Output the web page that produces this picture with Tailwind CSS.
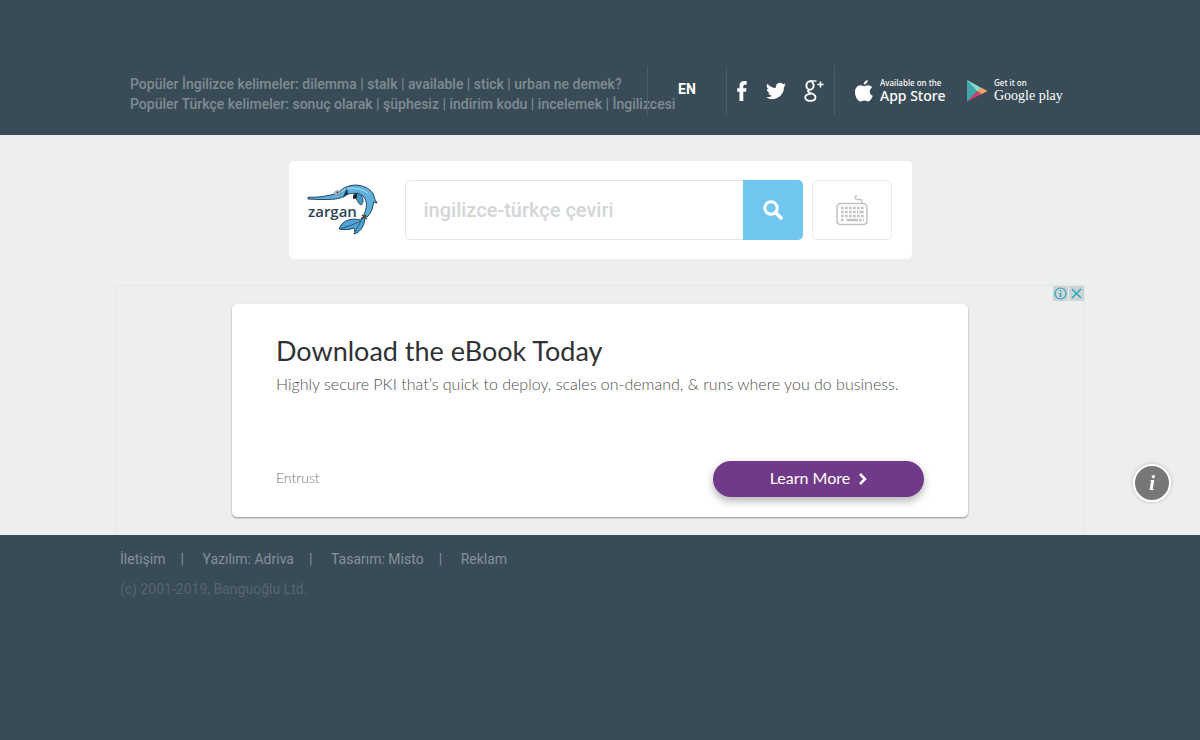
<!DOCTYPE html>
<html lang="tr">

<head>
    <meta charset="UTF-8">
    <meta name="viewport" content="width=device-width, initial-scale=1.0">
    <title>Zargan - İngilizce Türkçe Sözlük</title>
    <script src="https://cdn.jsdelivr.net/npm/@tailwindcss/browser@4"></script>
</head>

<body class="min-h-screen bg-[#394b56] font-['Roboto',sans-serif] text-sm">
    <header class="bg-[#394b56] pt-[66px] pb-5">
        <div class="max-w-[960px] mx-auto px-[10px] flex h-[49px]">
            <div class="flex-1 min-w-0 pt-2 leading-5 font-medium text-[#7f8b92] whitespace-nowrap">
                <p>Popüler İngilizce kelimeler: <a href="#">dilemma</a> | <a href="#">stalk</a> | <a href="#">available</a> | <a href="#">stick</a> | <a href="#">urban ne demek?</a></p>
                <p>Popüler Türkçe kelimeler: <a href="#">sonuç olarak</a> | <a href="#">şüphesiz</a> | <a href="#">indirim kodu</a> | <a href="#">incelemek</a> | <a href="#">İngilizcesi</a></p>
            </div>
            <a href="#" class="w-[79px] shrink-0 border-l border-[#4d5d67] flex items-center justify-center pb-1 font-bold text-white">EN</a>
            <div class="w-[109px] shrink-0 border-x border-[#4d5d67] flex items-center justify-between px-[10px] text-white">
                <a href="#" aria-label="Facebook">
                    <svg class="w-[10px] h-5" viewBox="0 0 10 20" fill="currentColor"><path d="M9.600 0v3.700H8C6.600 3.700 6.300 4.300 6.300 5.200V7.200H9.500L9.100 10.700H6.300V20H2.500V10.700H.2V7.200H2.500V4.700C2.500 1.700 4.300 0 7.200 0z"/></svg>
                </a>
                <a href="#" aria-label="Twitter">
                    <svg class="w-5 h-5" viewBox="0 0 24 24" fill="currentColor"><path d="M24 4.600a10 10 0 0 1-2.800.8 4.900 4.900 0 0 0 2.200-2.700c-1 .6-2 1-3.100 1.200a4.900 4.900 0 0 0-8.400 4.500A14 14 0 0 1 1.700 3.200a4.900 4.900 0 0 0 1.500 6.600c-.8 0-1.600-.2-2.200-.6v.1a4.900 4.900 0 0 0 3.900 4.800c-.7.2-1.500.2-2.200.1a4.900 4.900 0 0 0 4.600 3.400A9.900 9.900 0 0 1 0 19.500a14 14 0 0 0 21.500-12.400A10 10 0 0 0 24 4.600z"/></svg>
                </a>
                <a href="#" aria-label="Google+">
                    <svg class="w-5 h-[22px]" viewBox="0 0 20 22" fill="none" stroke="currentColor">
                        <ellipse cx="6" cy="5.500" rx="3.600" ry="4.200" stroke-width="2"/>
                        <path d="M6 1H12.500" stroke-width="1.400"/>
                        <path d="M5 9.800C3.300 11 4 12.300 6 12.900C9 13.800 11.500 14.600 11.500 17.200C11.500 19.500 9.300 20.800 6.200 20.800C3.200 20.800 1.200 19.600 1.200 17.600C1.200 15.400 3.500 14 7 13.800" stroke-width="1.800"/>
                        <path d="M16.500 1.500v6M13.500 4.500h6" stroke-width="1.500"/>
                    </svg>
                </a>
            </div>
            <div class="w-[235px] shrink-0 flex items-center gap-5 pl-5 text-white whitespace-nowrap">
                <a href="#" class="flex items-center gap-[7px]">
                    <svg class="w-[18px] h-[22px]" viewBox="0 0 18 22" fill="currentColor"><path d="M12.700 0c.2 2.300-1.700 4.600-4 4.700C8.500 2.500 10.400.3 12.700 0zM9.200 6.200c.9 0 2-1 3.800-1 1.700 0 3.200.9 4.100 2.200-3.500 2.100-3 6.900.7 8.300-.8 2.300-2.700 5.600-4.700 5.700-1.500 0-2-.9-3.800-.9s-2.400.9-3.800.9C2.900 21.500 0 16.500 0 12.200 0 7.900 2.600 5.300 5.200 5.200c1.600 0 3 1 4 1z"/></svg>
                    <span class="flex flex-col w-[66px]">
                        <span class="text-[8px] leading-[10px] font-medium font-['Noto_Sans',sans-serif]">Available on the</span>
                        <span class="text-sm leading-4 font-medium font-['Noto_Sans',sans-serif]">App Store</span>
                    </span>
                </a>
                <a href="#" class="flex items-center gap-[6px]">
                    <svg class="w-[22px] h-6" viewBox="0 0 22 24">
                        <path d="M1 1L14 8.500L11 12L1 22.500z" fill="#49b8b4"/>
                        <path d="M1 1L11 12L1 22.500z" fill="#42a5ab"/>
                        <path d="M1 1L15.500 9L11.500 12.500z" fill="#8adbc5"/>
                        <path d="M1 22.500L11.500 12L15.500 15z" fill="#d0416f"/>
                        <path d="M15.500 8.800L21.500 12L15.500 15.300L11.500 12z" fill="#f3a36b"/>
                    </svg>
                    <span class="flex flex-col">
                        <span class="text-[8px] leading-[10px] font-medium font-['Noto_Sans',sans-serif]">Get it on</span>
                        <span class="text-sm leading-4 font-['Liberation_Serif',serif]">Google play</span>
                    </span>
                </a>
            </div>
        </div>
    </header>

    <main class="bg-[#edefef] pt-[26px]">
        <form class="max-w-[623px] mx-auto bg-white rounded-[5px] py-[19px] pr-5 pl-[18px] flex items-center">
            <a href="#" class="w-[98px] shrink-0" aria-label="Zargan">
                <svg class="w-[72px] h-[54px]" viewBox="0 0 72 54">
                    <path d="M1 14.200C10 14.800 22 13 31 10C36 4 44 1.500 51 2.200C61 3.500 67 9 67.500 15.500L70 20L66.500 19C66 26 63 31.500 60 34L56.500 32.500C60 26 61 18 56 13C48 9 42 10 37 13C32 17 20 17 1 16z" fill="#5fb1dc" stroke="#24465b" stroke-width="1"/>
                    <path d="M34 8.500C42 3.500 53 4.500 61 10" fill="none" stroke="#9ad3ef" stroke-width="1.300"/>
                    <path d="M38 9L40 5L41 11L36 15z" fill="#173b52"/>
                    <path d="M47 11C51 9 54 11 55 14C57 17 56 21 54 22C50 20 51 16 47 14z" fill="#4798c7" stroke="#173b52" stroke-width=".8"/>
                    <path d="M46 13L50 10L50 15L46 16z" fill="#17232b"/>
                    <path d="M27 9.500l3-2 3 1v3l-5 .5z" fill="#bbc6cc" stroke="#6d7d86" stroke-width=".6"/>
                    <circle cx="30.500" cy="9.500" r="1" fill="#253d4d"/>
                    <path d="M32 46C36 36 45 35 54 37L58 34C58 40 55 49 47 51C48 49 48 47 47 45C42 47 37 47 32 46z" fill="#4fa3d4" stroke="#24465b" stroke-width="1"/>
                    <path d="M34 45.500Q44 43 54 38L48 49" fill="none" stroke="#24465b" stroke-width=".8"/>
                    <path d="M54 36L59 32M55 32L60 36" stroke="#473c36" stroke-width="1.500"/>
                    <text x="1" y="34" font-family="Open Sans, sans-serif" font-size="15" font-weight="600" fill="#2b4353">zargan</text>
                </svg>
            </a>
            <input type="text" aria-label="ingilizce-türkçe çeviri" placeholder="ingilizce-türkçe çeviri" class="flex-1 min-w-0 h-[60px] border border-r-0 border-[#e4e4e4] rounded-l-[5px] px-[18px] text-xl font-medium text-gray-700 placeholder:text-[#d4d5d6] outline-none">
            <button type="submit" aria-label="Ara" class="w-[60px] h-[60px] shrink-0 bg-[#70c6ee] rounded-r-[5px] flex items-center justify-center text-white">
                <svg class="w-5 h-5" viewBox="0 0 20 20" fill="none" stroke="currentColor"><circle cx="8" cy="8" r="6.200" stroke-width="3"/><path d="M12.500 12.500L18 18" stroke-width="3.600" stroke-linecap="round"/></svg>
            </button>
            <button type="button" aria-label="Klavye" class="w-20 h-[60px] ml-[9px] shrink-0 border border-[#e9e8ea] rounded-[5px] flex items-center justify-center">
                <svg class="w-8 h-8" viewBox="0 0 32 32" fill="none" stroke="#c0c2c4">
                    <rect x="1" y="9.500" width="30" height="21" rx="3.500" stroke-width="1.500"/>
                    <path d="M26 9.500V7Q26 5.500 24 5.500H21Q19 5.500 19 4Q19 2 21 1.500" stroke-width="1.300"/>
                    <path d="M5 14H28M5 22H28" stroke-width="2.600" stroke-dasharray="2.600 1.400"/>
                    <path d="M5 18H22M5 26H9M23 26H28" stroke-width="2.600" stroke-dasharray="2.600 1.400"/>
                    <path d="M23.500 18H27.600M10.500 26H22" stroke-width="2.600"/>
                </svg>
            </button>
        </form>

        <section class="relative max-w-[970px] mx-auto mt-[26px] border border-b-0 border-[#e5e7e7] pt-[18px] pb-[18px]">
            <div class="absolute top-0 right-0 flex gap-px text-[#22a9bf]">
                <a href="#" aria-label="Reklam bilgisi" class="bg-[#cfd3d4]">
                    <svg class="w-[15px] h-[15px]" viewBox="0 0 15 15" fill="none" stroke="currentColor" stroke-width="1.200"><circle cx="7.500" cy="7.500" r="5.500"/><path d="M7.500 6.500V11M7.500 4V5.300" stroke-width="1.500"/></svg>
                </a>
                <button type="button" aria-label="Reklamı kapat" class="bg-[#cfd3d4]">
                    <svg class="w-[15px] h-[15px]" viewBox="0 0 15 15" stroke="currentColor" stroke-width="1.500"><path d="M3 3L12 12M12 3L3 12"/></svg>
                </button>
            </div>
            <div class="max-w-[736px] mx-auto bg-white rounded-[5px] shadow-[0_1px_2px_rgba(0,0,0,0.4)] px-11 pt-[31px] pb-5 font-['Lato',sans-serif]">
                <h2 class="text-[27px] leading-8 text-[#303134]">Download the eBook Today</h2>
                <p class="mt-1 text-base leading-[26px] font-light text-[#4f4f4f]">Highly secure PKI that’s quick to deploy, scales on-demand, &amp; runs where you do business.</p>
                <div class="mt-16 flex items-center justify-between">
                    <span class="pb-0.5 text-sm font-light text-[#757575]">Entrust</span>
                    <a href="#" class="w-[211px] h-9 rounded-full bg-[#713a88] shadow-[0_4px_8px_rgba(0,0,0,0.3)] flex items-center justify-center gap-[9px] text-base text-white">
                        <span class="pb-0.5">Learn More</span>
                        <svg class="w-2 h-3" viewBox="0 0 8 12" fill="none" stroke="currentColor" stroke-width="2.500"><path d="M1 1L6 6L1 11"/></svg>
                    </a>
                </div>
            </div>
        </section>
    </main>

    <footer class="max-w-[960px] mx-auto pt-[14px] leading-5 text-[#84919a]">
        <nav class="flex">
            <a href="#">İletişim</a>
            <span class="w-[37px] pl-[15px]">|</span>
            <a href="#">Yazılım: Adriva</a>
            <span class="w-[37px] pl-[15px]">|</span>
            <a href="#">Tasarım: Misto</a>
            <span class="w-[37px] pl-[15px]">|</span>
            <a href="#">Reklam</a>
        </nav>
        <p class="mt-[10px] text-[#566670]">(c) 2001-2019, Banguoğlu Ltd.</p>
    </footer>

    <button type="button" aria-label="Bilgi" class="fixed right-[29px] bottom-[238px] w-[38px] h-[38px] rounded-full border-2 border-white bg-[#777777] shadow-[0_0_4px_rgba(0,0,0,0.2)] font-['Liberation_Serif',serif] text-[22px] leading-none font-bold italic text-white">i</button>
</body>

</html>
